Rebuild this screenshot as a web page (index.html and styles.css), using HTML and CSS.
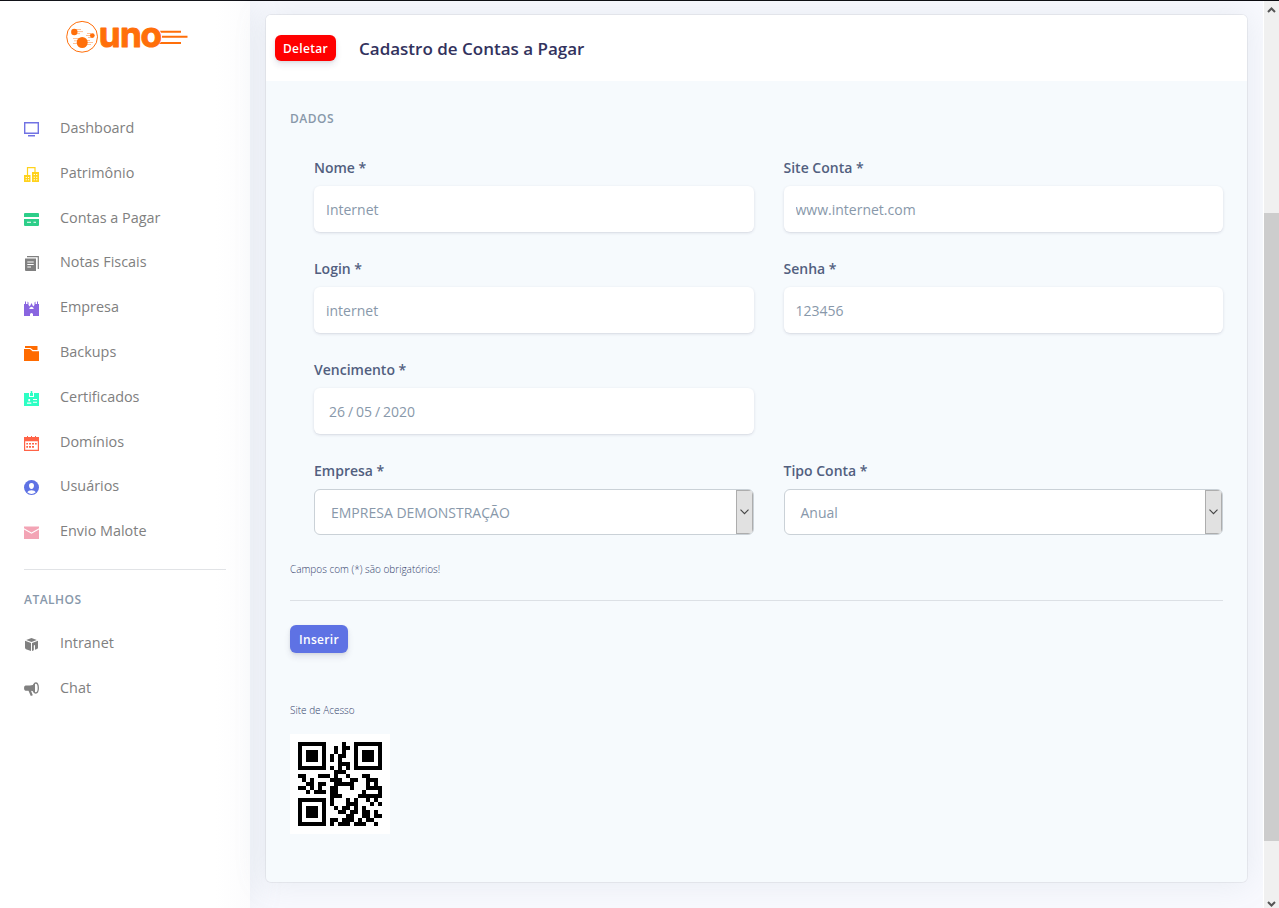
FILE: index.html
```html
<!DOCTYPE html>
<html lang="pt-BR">
<head>
<meta charset="utf-8">
<title>Cadastro de Contas a Pagar</title>
<link rel="stylesheet" href="styles.css">
</head>
<body>
<div class="app">
  <nav class="sidebar">
    <svg class="logo" viewBox="0 0 122 36" fill="#ff6f0a">
      <circle cx="16.100" cy="17.800" r="15.400" fill="#fff" stroke="#ff6f0a" stroke-width="1"/>
      <circle cx="8.300" cy="13" r="3.200"/><circle cx="26.300" cy="16.600" r="2.400"/><circle cx="16.200" cy="23.500" r="5.500"/>
      <path d="M9 10.500h6M9 12.600h8M9 14.600h5M21 14.500h4M20 16.500h5M22 18.500h4M7 19.500h6M8 21.800h6M7 24.500h6M19 21.500h5M20 23.500h7M20 25.500h5" stroke="#ff6f0a" stroke-width=".7" opacity=".6"/>
      <text class="logo-text" x="32.700 54 74.400" y="28.200">uno</text>
      <path d="M94 11.700h21v2H95zM96 16.800h25.500v2H96zM95 22.900h20v2H93z"/>
    </svg>
    <ul class="menu">
      <li><svg viewBox="0 0 15 15"><path d="M.7.7h13.600v10.600H.7z" fill="none" stroke="#7172e3" stroke-width="1.400"/><path d="M4 13h7v1.500H4z" fill="#7172e3"/></svg><span>Dashboard</span></li>
      <li><svg viewBox="0 0 15 15" fill="#ffd21c"><path d="M3.500 8V.6h7.500V5" fill="none" stroke="#ffd21c" stroke-width="1.200"/><path fill-rule="evenodd" d="M0 8h6.500v7H0zM1.700 10v1h1.100v-1zM4 10v1h1.100v-1zM1.700 12.300v1h1.100v-1zM4 12.300v1h1.100v-1zM8 5h7v10H8zM9.700 7v1h1.200V7zM12.100 7v1h1.200V7zM9.700 9.700v1h1.200v-1zM12.100 9.700v1h1.200v-1zM9.700 12.300v1h1.200v-1zM12.100 12.300v1h1.200v-1z"/></svg><span>Patrimônio</span></li>
      <li><svg viewBox="0 0 15 15"><path fill="#2dce89" fill-rule="evenodd" d="M1 1h13q1 0 1 1v3H0V2q0-1 1-1zM0 7h15v6q0 1-1 1H1q-1 0-1-1zM3 9.700v1.100h4V9.700zM9.500 9.700v1.100H12V9.700z"/></svg><span>Contas a Pagar</span></li>
      <li><svg viewBox="0 0 15 15"><path d="M3 .7h11.300V13" fill="none" stroke="#808080" stroke-width="1.200"/><path fill="#808080" fill-rule="evenodd" d="M1 2.500h11V15H2q-1 0-1-1zM3.300 5.500v1.100h6.400V5.500zM3.300 8v1.100h6.400V8zM3.300 10.500v1.100H7v-1.100z"/></svg><span>Notas Fiscais</span></li>
      <li><svg viewBox="0 0 15 15"><path fill="#8965e0" fill-rule="evenodd" d="M0 15V3h1V1l1-1v3h1.500V.500l1 1V4l1.300 1.500L7.500 2l1.700 3.500L10.500 4V1.500l1-1V3H13V0l1 1v2h1v12H9v-2q-1.500-1.800-3 0v2zM5.200 8h4.600Q9.500 6 7.500 5.700 5.500 6 5.200 8z"/></svg><span>Empresa</span></li>
      <li><svg viewBox="0 0 15 15" fill="#ff6b00"><path d="M1 0h12.500v4H9L6.500 2H1zM0 3h6l2.500 2.200H15V15H0z"/></svg><span>Backups</span></li>
      <li><svg viewBox="0 0 15 15"><path fill="#2dffc4" fill-rule="evenodd" d="M6.700 0h1.600v2H9v3H6V2h.7zM0 2h5v4h5V2h5v13H0zM4.300 8v2.200h1.800V8zM3 12.700h4.300v-1.300H3zM9 8v1h4V8zM9 10.700v1h4v-1z"/></svg><span>Certificados</span></li>
      <li><svg viewBox="0 0 15 15"><path fill="#ff6347" fill-rule="evenodd" d="M0 1h3V0h1v1h3V0h1v1h3V0h1v1h3v14H0zM1.200 5.200v8.600h12.600V5.200zM5 7h2v1.500H5zM8 7h2v1.500H8zM11 7h1.700v1.500H11zM2.300 10H4v1.700H2.300zM5 10h2v1.700H5zM8 10h2v1.700H8zM2.300 7H4v1.500H2.300z"/></svg><span>Domínios</span></li>
      <li><svg viewBox="0 0 15 15"><circle cx="7.500" cy="7.500" r="7.500" fill="#5e72e4"/><path d="M7.500 3C5.600 3 5 4.400 5 5.800S6 9 7.500 9 10 7.200 10 5.800 9.400 3 7.500 3zM3.200 12.300q1-2 4.300-2t4.300 2Q9.500 14 7.500 14t-4.300-1.700z" fill="#fff"/></svg><span>Usuários</span></li>
      <li><svg viewBox="0 0 15 15" fill="#f3a4b5"><path d="M0 1.500h15v1.700L7.500 7.500 0 3.200zM0 4.500l7.500 4.200L15 4.500V14H0z"/></svg><span>Envio Malote</span></li>
    </ul>
    <hr class="side-rule">
    <h6 class="eyebrow">ATALHOS</h6>
    <ul class="menu shortcuts">
      <li><svg viewBox="0 0 15 15" fill="#808080"><path d="M7.500 1l5.300 1.900-5.300 2-5.300-2zM1 3.800l6 2.200v8L2 12.200q-1-.4-1-1.400zM14 3.800L8 6v8l1.800-.7V8.500l1.200-.4v4.700l2-.7q1-.4 1-1.400z"/></svg><span>Intranet</span></li>
      <li><svg viewBox="0 0 15 15"><path fill="#808080" d="M1.500 3.500H6q3 0 5-2v9q-2-1.700-4-1.800l1.800 4.600-2 .7L4.500 8.700h-3Q0 8.500 0 6t1.500-2.500z"/><ellipse cx="11.700" cy="6" rx="2.600" ry="5" fill="none" stroke="#808080" stroke-width="1.300"/></svg><span>Chat</span></li>
    </ul>
  </nav>
  <main class="content">
    <section class="card">
      <header class="card-header"><button class="btn danger">Deletar</button><h3>Cadastro de Contas a Pagar</h3></header>
      <div class="card-body">
        <h6 class="eyebrow">DADOS</h6>
        <form class="fields">
          <label class="field">Nome *<input value="Internet"></label>
          <label class="field">Site Conta *<input value="www.internet.com"></label>
          <label class="field">Login *<input value="internet"></label>
          <label class="field">Senha *<input value="123456"></label>
          <label class="field date">Vencimento *<input value="26 / 05 / 2020"></label>
          <label class="field start">Empresa *<span class="select"><span>EMPRESA DEMONSTRAÇÃO</span><i><svg viewBox="0 0 9 6"><path d="M.5.7l4 4 4-4"/></svg></i></span></label>
          <label class="field">Tipo Conta *<span class="select"><span>Anual</span><i><svg viewBox="0 0 9 6"><path d="M.5.7l4 4 4-4"/></svg></i></span></label>
        </form>
        <p class="note">Campos com (*) são obrigatórios!</p>
        <hr class="rule">
        <button class="btn primary">Inserir</button>
        <p class="note site">Site de Acesso</p>
        <div class="code" id="code"></div>
      </div>
    </section>
  </main>
  <aside class="scrollbar">
    <svg viewBox="0 0 9 6"><path d="M1 5l3.500-3.500L8 5"/></svg>
    <div class="thumb"></div>
    <svg viewBox="0 0 9 6"><path d="M1 1l3.500 3.500L8 1"/></svg>
  </aside>
</div>
<script src="qr.js"></script>
</body>
</html>
```
FILE: styles.css
```css
*{box-sizing:border-box}
body{margin:0;font-family:"Open Sans",sans-serif;color:#525f7f;background:#f8f9fe;overflow:hidden}
h3,h6,p,ul{margin:0;padding:0}
.app{display:flex;height:908px;border-top:1px solid #0b0b10}
.sidebar{flex:none;width:250px;padding:18px 24px 0;box-shadow:0 0 32px rgba(136,152,170,.15);background:linear-gradient(90deg,#fff 215px,#fcfcfd)}
.logo{display:block;width:122px;height:36px;margin-left:42px;overflow:visible}
.logo-text{font:700 35px Inter,sans-serif;stroke:#ff6f0a;stroke-width:1;stroke-linejoin:round}
.menu{list-style:none;margin-top:50.600px}
.menu li{display:flex;align-items:center;height:44.800px;font-size:14.400px;color:#808080}
.menu svg{width:15px;height:15px;margin:3px 21px 0 0}
.menu span{line-height:24px}
.side-rule{height:1px;border:0;background:#e1e3e6;margin:15px 0 23px}
.eyebrow{font-size:12px;line-height:14px;font-weight:600;letter-spacing:.48px;color:#8898aa}
.menu.shortcuts{margin-top:14px}
.content{flex:none;width:1013px;padding:13px 15px 0}
.card{height:869px;width:983px;border:1px solid rgba(0,0,0,.05);border-radius:6px;background:#f6fafd;background-clip:padding-box;box-shadow:0 0 32px rgba(136,152,170,.15);overflow:hidden}
.card-header{height:66px;background:#fff;display:flex;align-items:center;padding:0 9px}
.card-header h3{font-size:17px;line-height:24px;font-weight:600;color:#32325d;margin-left:23px;margin-top:1px}
.btn{border:0;border-radius:6px;color:#fff;font:600 12px "Open Sans",sans-serif;padding:0;letter-spacing:.3px;box-shadow:0 4px 6px rgba(50,50,93,.11),0 1px 3px rgba(0,0,0,.08)}
.danger{background:#f00;width:61px;height:26px}
.primary{display:block;background:#5e72e4;width:58px;height:28px}
.card-body{padding:31px 24px 0}
.fields{display:grid;grid-template-columns:440px 439px;column-gap:29.500px;padding:31px 0 0 24px}
.field{display:block;height:101px;font-size:14px;font-weight:600;line-height:21px}
.start{grid-column:1}
.field input{display:block;width:100%;height:46px;margin-top:8px;border:0;border-radius:6px;background:#fff;padding:0 12px;font:14px "Open Sans",sans-serif;color:#8898aa;box-shadow:0 1px 3px rgba(50,50,93,.15),0 1px 0 rgba(0,0,0,.02)}
.field.date input{padding-left:15px;word-spacing:-.7px}
.select{display:flex;justify-content:space-between;height:46px;margin-top:8px;border:1px solid #cad1d7;border-radius:6px;background:#fff;overflow:hidden;font-weight:400;color:#8898aa}
.select span{padding:12px 16px}
.select i{width:17px;background:#e1e1e1;border:1px solid #adadad;display:flex;align-items:center;justify-content:center}
.select svg{width:9px;height:6px;fill:none;stroke:#444;stroke-width:1.100}
.note{font-size:10px;line-height:15px;font-weight:300;color:#32406a;padding-top:1px}
.rule{height:1px;border:0;background:#dce0e5;margin:23px 0 24px}
.site{margin-top:49px}
.code{margin-top:16px}
.qr{width:100px;height:100px;background:#fff;display:block}
.scrollbar{flex:none;width:16px;border-left:1px solid #fff;background:#f0f0f0;display:flex;flex-direction:column;align-items:center;padding:6px 0 1px}
.scrollbar svg{width:9px;height:6px;fill:none;stroke:#555;stroke-width:2}
.thumb{width:15px;height:628px;background:#cdcdcd;margin:200px 0 auto}
```
FILE: qr.js
```js
// Version 1-L QR code for the account's site.
function multiply(x, y) {
  let z = 0;
  for (let i = 7; i >= 0; i--) {
    z = (z << 1) ^ ((z >>> 7) * 0x11d);
    z ^= ((y >>> i) & 1) * x;
  }
  return z;
}
function codewords(text) {
  let bits = '0100' + text.length.toString(2).padStart(8, '0');
  for (const c of text) bits += c.charCodeAt(0).toString(2).padStart(8, '0');
  bits += '0000';
  const data = bits.match(/.{8}/g).map(b => parseInt(b, 2));
  for (let pad = 0xec; data.length < 19; pad ^= 0xec ^ 0x11) data.push(pad);
  const div = [0, 0, 0, 0, 0, 0, 1];
  let root = 1;
  for (let i = 0; i < 7; i++) {
    for (let j = 0; j < 7; j++) {
      div[j] = multiply(div[j], root);
      if (j + 1 < 7) div[j] ^= div[j + 1];
    }
    root = multiply(root, 2);
  }
  const rem = Array(7).fill(0);
  for (const b of data) {
    const f = b ^ rem.shift();
    rem.push(0);
    div.forEach((c, i) => { rem[i] ^= multiply(c, f); });
  }
  return data.concat(rem);
}
const MASK = 5;
const inverted = (x, y) => x * y % 2 + x * y % 3 === 0;
function qr(text) {
  const m = Array.from({ length: 21 }, () => Array(21).fill(null));
  const put = (x, y, v) => { if (x >= 0 && y >= 0 && x < 21 && y < 21) m[y][x] = v ? 1 : 0; };
  for (let i = 0; i < 21; i++) { put(6, i, i % 2 === 0); put(i, 6, i % 2 === 0); }
  for (const [cx, cy] of [[3, 3], [17, 3], [3, 17]])
    for (let dy = -4; dy <= 4; dy++) for (let dx = -4; dx <= 4; dx++) {
      const d = Math.max(Math.abs(dx), Math.abs(dy));
      put(cx + dx, cy + dy, d !== 2 && d !== 4);
    }
  const info = 8 | MASK;
  let rem = info;
  for (let i = 0; i < 10; i++) rem = (rem << 1) ^ ((rem >>> 9) * 0x537);
  const f = (info << 10 | rem) ^ 0x5412;
  const bit = i => (f >>> i) & 1;
  for (let i = 0; i <= 5; i++) put(8, i, bit(i));
  put(8, 7, bit(6)); put(8, 8, bit(7)); put(7, 8, bit(8));
  for (let i = 9; i < 15; i++) put(14 - i, 8, bit(i));
  for (let i = 0; i < 8; i++) put(20 - i, 8, bit(i));
  for (let i = 8; i < 15; i++) put(8, 6 + i, bit(i));
  put(8, 13, 1);
  const cw = codewords(text);
  let n = 0;
  for (let right = 20; right >= 1; right -= 2) {
    if (right === 6) right = 5;
    for (let v = 0; v < 21; v++) for (let j = 0; j < 2; j++) {
      const x = right - j;
      const y = ((right + 1) & 2) === 0 ? 20 - v : v;
      if (m[y][x] === null) {
        m[y][x] = ((cw[n >>> 3] >>> (7 - (n & 7))) & 1) ^ (inverted(x, y) ? 1 : 0);
        n++;
      }
    }
  }
  let d = '';
  m.forEach((row, y) => row.forEach((v, x) => { if (v) d += `M${8 + x * 4} ${8 + y * 4}h4v4h-4z`; }));
  return `<svg class="qr" viewBox="0 0 100 100" shape-rendering="crispEdges"><path d="${d}"/></svg>`;
}
document.getElementById('code').innerHTML = qr('www.internet.com');
```
